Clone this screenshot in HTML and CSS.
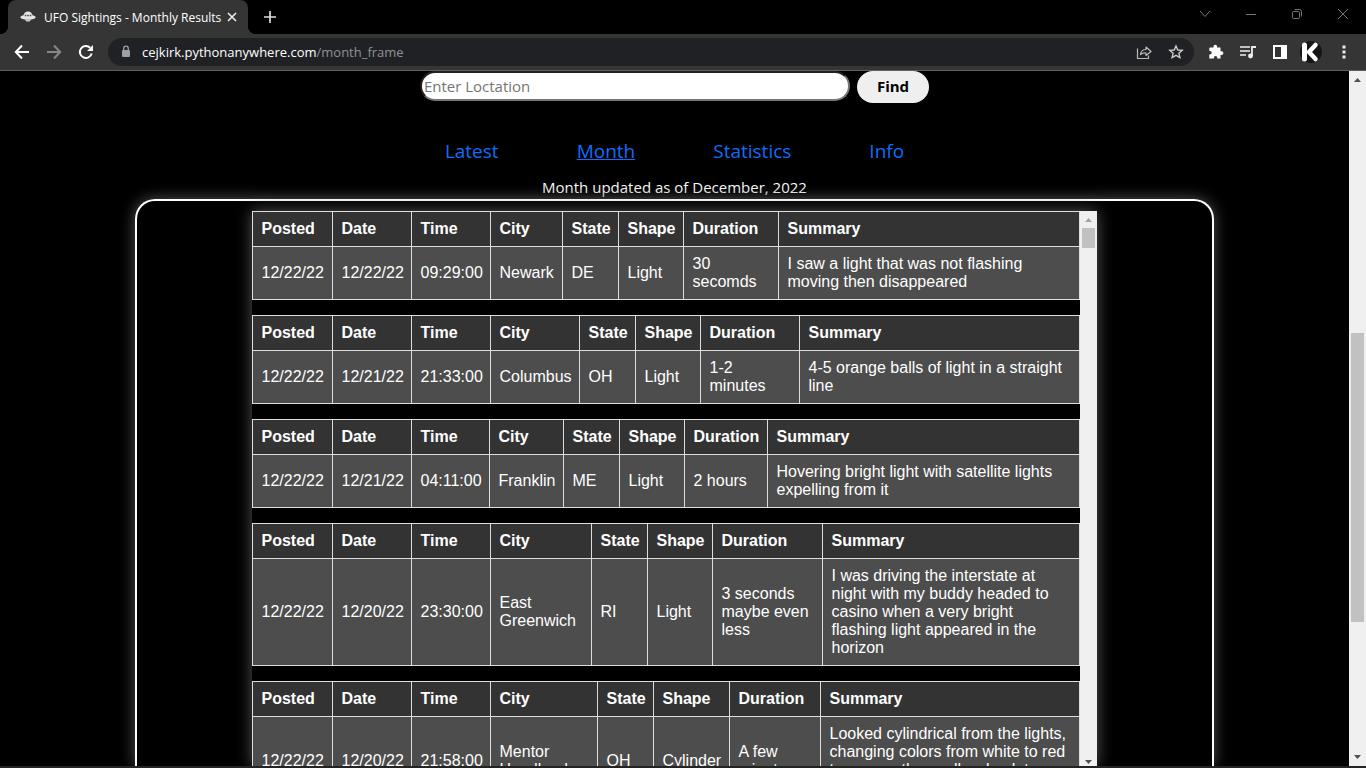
FILE: index.html
```html
<!DOCTYPE html>
<html lang="en">
<head>
<meta charset="utf-8">
<title>UFO Sightings - Monthly Results</title>
<link rel="stylesheet" href="styles.css">
</head>
<body>
<div class="window">
  <header class="titlebar">
    <div class="tab">
      <svg width="16" height="16" viewBox="0 0 16 16"><path d="M3.500 7a4.500 4.500 0 0 1 9 0z" fill="#e4e4e4"/><ellipse cx="8" cy="8.300" rx="7.700" ry="2.500" fill="#e4e4e4"/><path d="M4.500 10.500h7l-2 2h-3z" fill="#ccc"/><path d="M4.800 6.500h1.500M7.300 6.500h1.500M9.800 6.500h1.500" stroke="#444" stroke-width="1.300"/></svg>
      <span class="tab-title">UFO Sightings - Monthly Results</span>
      <button class="plain" aria-label="Close tab"><svg width="16" height="16" viewBox="0 0 16 16"><path d="M4 4l8 8M12 4l-8 8" stroke="#eee" stroke-width="1.600"/></svg></button>
    </div>
    <button class="plain newtab" aria-label="New tab"><svg width="16" height="16" viewBox="0 0 16 16"><path d="M8 2v12M2 8h12" stroke="#ddd" stroke-width="1.700"/></svg></button>
    <div class="caption">
      <button class="plain" aria-label="Tab search"><svg width="16" height="16" viewBox="0 0 16 16"><path d="M3 5l5 5.500L13 5" fill="none" stroke="#777"/></svg></button>
      <button class="plain" aria-label="Minimize"><svg width="16" height="16" viewBox="0 0 16 16"><path d="M3 8.500h10" stroke="#777"/></svg></button>
      <button class="plain" aria-label="Restore"><svg width="16" height="16" viewBox="0 0 16 16"><rect x="3.500" y="5.500" width="7" height="7" rx="1" fill="none" stroke="#777"/><path d="M5.500 3.500h5a2 2 0 0 1 2 2v5" fill="none" stroke="#777"/></svg></button>
      <button class="plain" aria-label="Close"><svg width="16" height="16" viewBox="0 0 16 16"><path d="M3 3l10 10M13 3L3 13" stroke="#777"/></svg></button>
    </div>
  </header>
  <div class="toolbar">
    <button class="plain" aria-label="Back"><svg width="16" height="16" viewBox="0 0 16 16"><path d="M15 8H2M8 1.500L1.800 8 8 14.500" fill="none" stroke="#fff" stroke-width="2"/></svg></button>
    <button class="plain" aria-label="Forward"><svg width="16" height="16" viewBox="0 0 16 16"><path d="M1 8h13M8 1.500L14.200 8 8 14.500" fill="none" stroke="#888" stroke-width="2"/></svg></button>
    <button class="plain" aria-label="Reload"><svg width="16" height="16" viewBox="0 0 16 16"><path d="M13.700 9.500a6 6 0 1 1-1.500-5.700" fill="none" stroke="#fff" stroke-width="2"/><path d="M15 1v6H9z" fill="#fff"/></svg></button>
    <div class="omnibox">
      <svg width="16" height="16" viewBox="0 0 16 16"><rect x="4" y="6" width="8" height="7" rx="1" fill="#9aa0a6"/><path d="M5.700 6V4.500a2.300 2.300 0 0 1 4.600 0V6" fill="none" stroke="#9aa0a6" stroke-width="1.300"/></svg>
      <span class="url">cejkirk.pythonanywhere.com<span class="path">/month_frame</span></span>
      <button class="plain" aria-label="Share"><svg width="16" height="16" viewBox="0 0 16 16"><path d="M1.500 4.500v10h11v-3" fill="none" stroke="#bbb" stroke-width="1.200"/><path d="M4.500 10.500c.5-3.500 2.500-5 5.500-5V3l5 4.500-5 4V9c-2.500-.2-4 .3-5.500 1.500z" fill="none" stroke="#bbb" stroke-width="1.200" stroke-linejoin="round"/></svg></button>
      <button class="plain" aria-label="Bookmark"><svg width="16" height="16" viewBox="0 0 16 16"><path d="M8 2l1.800 4 4.400.4-3.300 2.900 1 4.300L8 11.300l-3.900 2.300 1-4.300L1.800 6.400 6.200 6z" fill="none" stroke="#ccc" stroke-width="1.400"/></svg></button>
    </div>
    <div class="extensions">
      <button class="plain" aria-label="Extensions"><svg width="16" height="16" viewBox="0 0 16 16"><path d="M2 3.500h3.500V2.600a1.800 1.800 0 0 1 3.600 0v.9h3.400v3.700h1a1.900 1.900 0 0 1 0 3.800h-1v3.500H9.300v-.8a1.700 1.700 0 0 0-3.400 0v.8H1.300v-4H2a1.700 1.700 0 0 0 0-3.400h-.7V4.200z" fill="#fff"/></svg></button>
      <button class="plain" aria-label="Media"><svg width="16" height="16" viewBox="0 0 16 16"><path d="M0 3h10M0 7h10M0 11h6" stroke="#eee" stroke-width="1.700"/><path d="M12 12V3h4" fill="none" stroke="#eee" stroke-width="1.800"/><circle cx="10.500" cy="12" r="2.400" fill="#eee"/></svg></button>
      <button class="plain" aria-label="Side panel"><svg width="16" height="16" viewBox="0 0 16 16"><rect x="2" y="2" width="12" height="12" fill="none" stroke="#fff" stroke-width="2"/><path d="M9 2h5v12H9z" fill="#fff"/></svg></button>
      <button class="plain profile" aria-label="Profile"><svg width="22" height="22" viewBox="0 0 22 22"><circle cx="11" cy="11" r="11" fill="#151515"/><path d="M4.500 4v14" stroke="#fff" stroke-width="5" stroke-linecap="round"/><path d="M15.500 4L9 11l6.500 7" fill="none" stroke="#fff" stroke-width="4.500" stroke-linecap="round" stroke-linejoin="round"/></svg></button>
      <button class="plain" aria-label="Menu"><svg width="16" height="16" viewBox="0 0 16 16"><path d="M6.500 1.500h3v3h-3zM6.500 6.500h3v3h-3zM6.500 11.500h3v3h-3z" fill="#eee"/></svg></button>
    </div>
  </div>
  <div class="viewport">
    <main class="page">
      <form class="search">
        <input class="location" type="text" placeholder="Enter Loctation" aria-label="Location">
        <button class="find" type="button">Find</button>
      </form>
      <nav class="nav"><a href="#">Latest</a><a href="#" class="current">Month</a><a href="#">Statistics</a><a href="#">Info</a></nav>
      <p class="updated">Month updated as of December, 2022</p>
      <section class="frame">
        <div class="results">
          <div class="list">
            <table>
              <colgroup><col style="width:80px"><col style="width:79px"><col style="width:79px"><col style="width:72px"><col style="width:56px"><col style="width:65px"><col style="width:95px"><col></colgroup>
              <tr><th>Posted</th><th>Date</th><th>Time</th><th>City</th><th>State</th><th>Shape</th><th>Duration</th><th>Summary</th></tr>
              <tr><td>12/22/22</td><td>12/22/22</td><td>09:29:00</td><td>Newark</td><td>DE</td><td>Light</td><td>30 secomds</td><td>I saw a light that was not flashing moving then disappeared</td></tr>
            </table>
            <table>
              <colgroup><col style="width:80px"><col style="width:79px"><col style="width:79px"><col style="width:89px"><col style="width:56px"><col style="width:65px"><col style="width:99px"><col></colgroup>
              <tr><th>Posted</th><th>Date</th><th>Time</th><th>City</th><th>State</th><th>Shape</th><th>Duration</th><th>Summary</th></tr>
              <tr><td>12/22/22</td><td>12/21/22</td><td>21:33:00</td><td>Columbus</td><td>OH</td><td>Light</td><td>1-2 minutes</td><td>4-5 orange balls of light in a straight line</td></tr>
            </table>
            <table>
              <colgroup><col style="width:80px"><col style="width:79px"><col style="width:78px"><col style="width:74px"><col style="width:56px"><col style="width:65px"><col style="width:83px"><col></colgroup>
              <tr><th>Posted</th><th>Date</th><th>Time</th><th>City</th><th>State</th><th>Shape</th><th>Duration</th><th>Summary</th></tr>
              <tr><td>12/22/22</td><td>12/21/22</td><td>04:11:00</td><td>Franklin</td><td>ME</td><td>Light</td><td>2 hours</td><td>Hovering bright light with satellite lights expelling from it</td></tr>
            </table>
            <table>
              <colgroup><col style="width:80px"><col style="width:79px"><col style="width:79px"><col style="width:101px"><col style="width:56px"><col style="width:65px"><col style="width:110px"><col></colgroup>
              <tr><th>Posted</th><th>Date</th><th>Time</th><th>City</th><th>State</th><th>Shape</th><th>Duration</th><th>Summary</th></tr>
              <tr><td>12/22/22</td><td>12/20/22</td><td>23:30:00</td><td>East Greenwich</td><td>RI</td><td>Light</td><td>3 seconds maybe even less</td><td>I was driving the interstate at night with my buddy headed to casino when a very bright flashing light appeared in the horizon</td></tr>
            </table>
            <table>
              <colgroup><col style="width:80px"><col style="width:79px"><col style="width:79px"><col style="width:107px"><col style="width:56px"><col style="width:76px"><col style="width:91px"><col></colgroup>
              <tr><th>Posted</th><th>Date</th><th>Time</th><th>City</th><th>State</th><th>Shape</th><th>Duration</th><th>Summary</th></tr>
              <tr><td>12/22/22</td><td>12/20/22</td><td>21:58:00</td><td>Mentor Headlands</td><td>OH</td><td>Cylinder</td><td>A few minutes</td><td>Looked cylindrical from the lights, changing colors from white to red to orange then yellow back to white</td></tr>
            </table>
          </div>
          <div class="scrollbar inner"><svg width="17" height="17" viewBox="0 0 17 17"><path d="M5 11h7L8.500 7z" fill="#a3a3a3"/></svg><div class="track"><div class="thumb"></div></div><svg width="17" height="17" viewBox="0 0 17 17"><path d="M5 11h7l-3.500 4z" fill="#505050"/></svg></div>
        </div>
      </section>
    </main>
    <div class="scrollbar"><svg width="17" height="17" viewBox="0 0 17 17"><path d="M5 11h7L8.500 7z" fill="#505050"/></svg><div class="track outer"><div class="thumb"></div></div><svg width="17" height="17" viewBox="0 0 17 17"><path d="M5 6h7l-3.500 4z" fill="#505050"/></svg></div>
  </div>
</div>
</body>
</html>
```
FILE: styles.css
```css
* { box-sizing: border-box; }
body { margin: 0; background: #000; color: #fff; font-family: "Open Sans", "Noto Sans", sans-serif; }
svg { display: block; flex: none; }
.plain { display: flex; padding: 0; border: 0; background: none; }
.window { display: flex; flex-direction: column; height: 100vh; overflow: hidden; border-bottom: 2px solid #242424; }

.titlebar { display: flex; flex: none; align-items: stretch; height: 34px; padding-left: 8px; }
.tab { position: relative; display: flex; align-items: center; width: 240px; padding: 0 8px 0 12px; background: #353535; border-radius: 8px 8px 0 0; }
.tab::before, .tab::after { content: ""; position: absolute; bottom: 0; width: 8px; height: 8px; }
.tab::before { left: -8px; background: radial-gradient(circle at 0 0, #000 8px, #353535 8px); }
.tab::after { right: -8px; background: radial-gradient(circle at 100% 0, #000 8px, #353535 8px); }
.tab-title { flex: 1; margin-left: 8px; font-size: 12px; white-space: nowrap; }
.newtab { align-items: center; margin-left: 14px; }
.caption { display: flex; gap: 30px; margin-left: auto; padding: 0 15px 6px 0; align-items: center; }

.toolbar { display: flex; flex: none; align-items: center; gap: 16px; height: 37px; padding: 0 14px; background: #353535; border-bottom: 1px solid #5f5f5f; }
.omnibox { display: flex; flex: 1; align-items: center; gap: 16px; height: 28px; margin-left: -2px; padding: 0 10px; border-radius: 14px; background: #202124; }
.url { flex: 1; margin-left: -8px; font-size: 13px; }
.path { color: #8e9296; }
.extensions { display: flex; align-items: center; gap: 16px; margin-left: -2px; }
.profile { margin: 0 -2px 0 -4px; }

.viewport { display: flex; flex: 1; min-height: 0; }
.page { display: flex; flex: 1; flex-direction: column; min-width: 0; overflow: hidden; }
.search { display: flex; flex: none; justify-content: center; align-items: flex-start; gap: 7px; }
.location { width: 430px; height: 30px; padding: 1px 2px; border: 2px inset #767676; border-radius: 15px; font: 15px "Open Sans", sans-serif; }
.location::placeholder { color: #757575; }
.find { height: 32px; padding: 0 20px 2px; border: 0; border-radius: 16px; background: #efefef; color: #000; font: bold 15px "Open Sans", sans-serif; }
.nav { display: flex; flex: none; justify-content: center; gap: 78px; margin-top: 35px; font-size: 19px; line-height: 26px; }
.nav a { color: #0d6efd; text-decoration: none; }
.nav .current { text-decoration: underline; }
.updated { flex: none; margin: 11px 0 0; text-align: center; font-size: 15px; line-height: 24px; }
.frame { display: flex; flex: 1; justify-content: center; min-height: 0; width: 80%; margin: 0 auto; padding: 10px 0 0; border: 2px solid #fff; border-bottom: 0; border-radius: 20px 20px 0 0; box-shadow: 0 0 15px #555; }
.results { display: flex; width: 845px; margin-right: 1px; background: #000; box-shadow: 0 0 15px #555; }
.list { flex: 1; overflow: hidden; }
table { width: 100%; margin-bottom: 15px; border-collapse: collapse; table-layout: fixed; font: 16px/18px "Liberation Sans", Arial, sans-serif; }
th, td { padding: 8px 7px 8px 9px; border: 1px solid #ddd; text-align: left; }
th { background: #333; }
td { background: #4d4d4d; }

.scrollbar { display: flex; flex: none; flex-direction: column; width: 17px; background: #f0f0f0; }
.track { flex: 1; padding: 0 2px; }
.thumb { height: 20px; background: #c1c1c1; }
.outer { padding-top: 245px; }
.outer .thumb { height: 289px; }
```
